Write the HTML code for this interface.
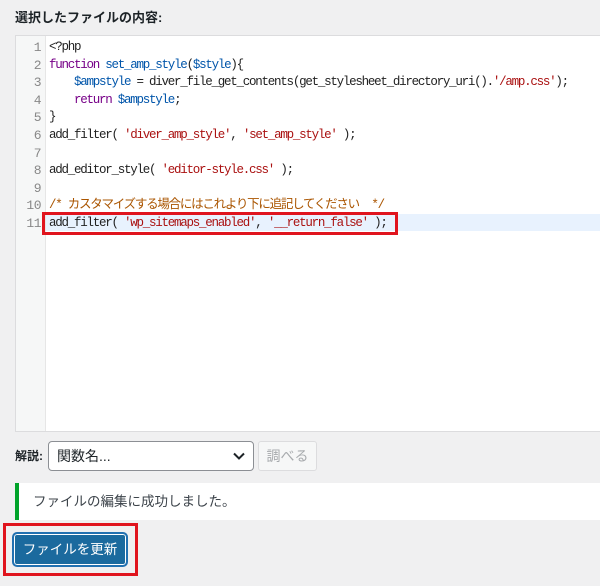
<!DOCTYPE html>
<html><head><meta charset="utf-8"><style>
body{margin:0;width:600px;height:586px;background:#f0f0f1;font-family:"Liberation Sans","Noto Sans CJK JP",sans-serif;position:relative;overflow:hidden;color:#1d2327}
.t{position:absolute;left:15px;top:7px;font-size:13px;font-weight:bold;color:#1d2327}
.ed{position:absolute;left:15px;top:35px;width:590px;height:395px;background:#fff;border:1px solid #dcdcde}
.gut{position:absolute;left:0;top:0;width:29px;height:100%;background:#f6f7f7;border-right:1px solid #e6e6e6}
.ln,.cd{position:absolute;font-family:"Liberation Mono","Noto Sans CJK JP",monospace;line-height:17.6px;white-space:pre;top:3px}
.ln{left:0;width:25px;text-align:right;color:#888;font-size:13px;letter-spacing:-0.5px}
.cd{left:33px;color:#222;font-size:12.5px;letter-spacing:-1.25px}
.hl{position:absolute;left:30px;top:178px;width:560px;height:17px;background:#e8f2fe}
.k{color:#770088}.v{color:#0055aa}.s{color:#aa1111}.c{color:#aa5500}
.red{position:absolute;border:3px solid #e0141e}
.lab{position:absolute;left:15px;top:447px;font-size:12px;font-weight:bold}
.sel{position:absolute;left:48px;top:441px;border:1px solid #8c8f94;border-radius:4px;background:#fff;font-size:14px;line-height:28px;padding-left:8px;box-sizing:border-box;width:206px;height:30px}
.btn2{position:absolute;left:258px;top:441px;width:59px;height:30px;border:1px solid #dcdcde;border-radius:3px;background:#f6f7f7;color:#a7aaad;font-size:14px;line-height:28px;text-align:center;box-sizing:border-box}
.note{position:absolute;left:15px;top:483px;width:585px;height:37px;background:#fff;border-left:4px solid #00a32a;box-sizing:border-box;font-size:13.5px;line-height:37px;padding-left:14px;color:#3c434a}
.btn{position:absolute;left:13px;top:533px;width:114px;height:33px;border:1px solid #2271b1;border-radius:4px;box-shadow:0 0 0 1px #fff inset,0 0 0 1px #2271b1;color:#fff;font-size:13.5px;line-height:31px;text-align:center;box-sizing:border-box;background:#1b6a9e}
</style></head><body>
<div class="t">選択したファイルの内容:</div>
<div class="ed">
<div class="gut"></div>
<div class="hl"></div>
<div class="ln">1
2
3
4
5
6
7
8
9
10
11</div>
<div class="cd">&lt;?php
<span class="k">function</span> <span class="v">set_amp_style</span>(<span class="v">$style</span>){
    <span class="v">$ampstyle</span> = diver_file_get_contents(get_stylesheet_directory_uri().<span class="s">'/amp.css'</span>);
    <span class="k">return</span> <span class="v">$ampstyle</span>;
}
add_filter( <span class="s">'diver_amp_style'</span>, <span class="s">'set_amp_style'</span> );

add_editor_style( <span class="s">'editor-style.css'</span> );

<span class="c">/* カスタマイズする場合にはこれより下に追記してください  */</span>
add_filter( <span class="s">'wp_sitemaps_enabled'</span>, <span class="s">'__return_false'</span> );</div>
</div>
<div class="red" style="left:42px;top:212px;width:350px;height:17px"></div>
<div class="lab">解説:</div>
<div class="sel">関数名...<svg style="position:absolute;right:8px;top:10px" width="12" height="8" viewBox="0 0 12 8"><path d="M1 1.5L6 6.5L11 1.5" stroke="#1d2327" stroke-width="2" fill="none"/></svg></div>
<div class="btn2">調べる</div>
<div class="note">ファイルの編集に成功しました。</div>
<div class="red" style="left:3px;top:523px;width:129px;height:47px"></div>
<div class="btn">ファイルを更新</div>
</body></html>
